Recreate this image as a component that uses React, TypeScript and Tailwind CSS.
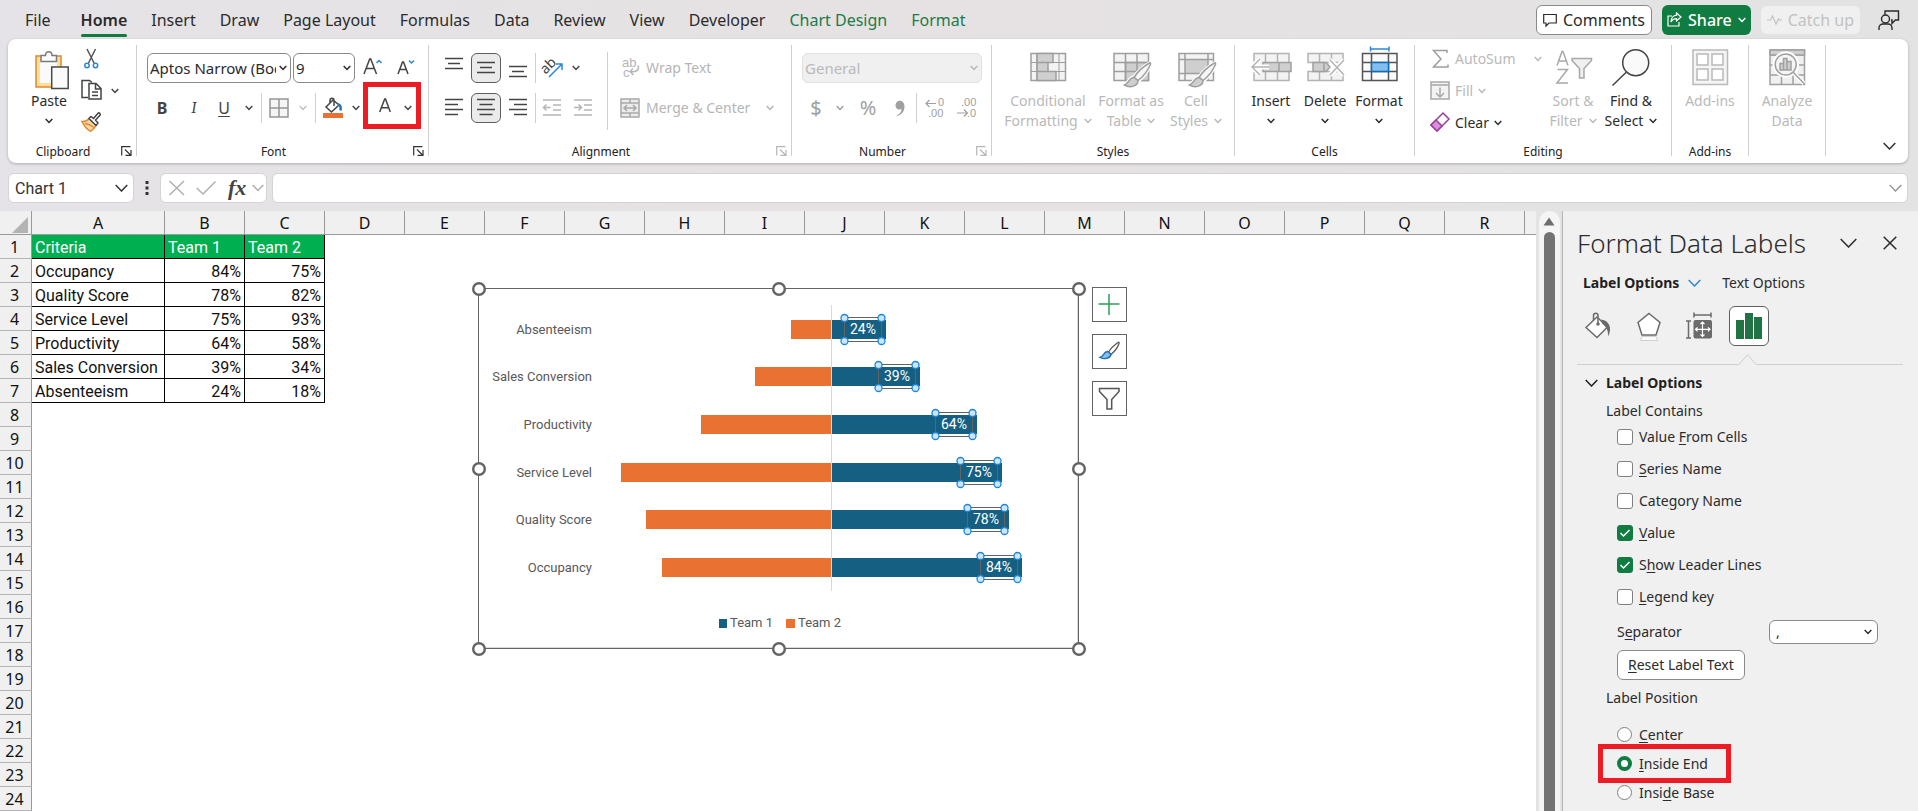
import { ReactNode } from "react";

const criteria = [
  { name: "Occupancy", team1: 84, team2: 75 },
  { name: "Quality Score", team1: 78, team2: 82 },
  { name: "Service Level", team1: 75, team2: 93 },
  { name: "Productivity", team1: 64, team2: 58 },
  { name: "Sales Conversion", team1: 39, team2: 34 },
  { name: "Absenteeism", team1: 24, team2: 18 },
];

const columns = "ABCDEFGHIJKLMNOPQR".split("");
const rows = Array.from({ length: 24 }, (_, i) => i + 1);

const Chevron = ({ size = 8, className = "", stroke = 1.5 }: any) => (
  <svg
    width={size}
    height={size / 2 + 2}
    viewBox={`0 0 ${size} ${size / 2 + 2}`}
    fill="none"
    stroke="currentColor"
    strokeWidth={stroke}
    className={`shrink-0 ${className}`}
  >
    <path d={`M0.7 1 L${size / 2} ${size / 2 + 0.5} L${size - 0.7} 1`} />
  </svg>
);

const Icon = ({ w = 20, h = 20, children, className = "" }: any) => (
  <svg
    width={w}
    height={h}
    viewBox={`0 0 ${w} ${h}`}
    fill="none"
    stroke="currentColor"
    strokeWidth={1.5}
    className={`shrink-0 overflow-visible ${className}`}
  >
    {children}
  </svg>
);

/* ---------- tabs ---------- */

const tabs = [
  "Insert",
  "Draw",
  "Page Layout",
  "Formulas",
  "Data",
  "Review",
  "View",
  "Developer",
];

const TabBar = () => (
  <header className="flex h-[39px] items-center justify-between pl-[25px] pr-[18px] text-base leading-5 text-[#2b2b2b]">
    <nav className="flex h-full items-center gap-6 whitespace-nowrap">
      <button className="mr-1.5">File</button>
      <button className="relative font-semibold">
        Home
        <span className="absolute inset-x-0 -bottom-[7px] h-[3px] rounded-full bg-[#107c41]" />
      </button>
      {tabs.map((tab) => (
        <button key={tab}>{tab}</button>
      ))}
      <button className="text-[#1b7c48]">Chart Design</button>
      <button className="text-[#1b7c48]">Format</button>
    </nav>
    <div className="flex items-center whitespace-nowrap">
      <button className="flex h-[30px] items-center gap-1.5 rounded-md border border-[#8a8a8a] bg-white px-1.5">
        <Icon w={14} h={14}>
          <path d="M0.7 1.5h12.6v8.5H6L3 13v-3H0.7z" strokeWidth={1.2} />
        </Icon>
        Comments
      </button>
      <button className="ml-2.5 flex h-[30px] items-center gap-1.5 rounded-md bg-[#107c41] px-[5px] font-medium text-white">
        <Icon w={15} h={15}>
          <path
            d="M5 4H1v10h11v-4M9.5 1l4.500 4-4.500 4V6.700C6.500 6.700 5 8 4 10c0-3.500 2-6.500 5.500-6.800z"
            strokeWidth={1.2}
          />
        </Icon>
        Share
        <Chevron />
      </button>
      <button className="ml-2.5 flex h-7 items-center gap-1.5 rounded-md bg-[#f0f0f0] px-1.5 text-[#c2c2c2]">
        <Icon w={15} h={14}>
          <path d="M0 7h3.5l2-4 3.5 8 2.5-5 1 1H15" strokeWidth={1.2} />
        </Icon>
        Catch up
      </button>
      <button className="ml-[18px]" aria-label="Account">
        <Icon w={22} h={22}>
          <path d="M7 6V2h13.5v9h-3.2L14 14.5V11h-1" strokeWidth={1.4} />
          <circle cx="7.5" cy="10" r="4" strokeWidth={1.4} />
          <path d="M1 21v-2c0-2.500 2-4 4-4h5c2 0 4 1.500 4 4v2" strokeWidth={1.4} />
        </Icon>
      </button>
    </div>
  </header>
);

/* ---------- ribbon ---------- */

const Launcher = ({ muted }: any) => (
  <button
    className={`absolute bottom-0 right-1 ${muted ? "text-[#b5b5b5]" : "text-[#333]"}`}
    aria-label="More settings"
  >
    <Icon w={11} h={10}>
      <path d="M9.5 0.700H0.700V9.500M4 3.500l5.500 5.500M10 4v5.400H4.500" strokeWidth={1.2} />
    </Icon>
  </button>
);

const Group = ({ label, className, children, launcher, muted }: any) => (
  <section
    className={`relative flex shrink-0 flex-col border-r border-[#d0d0d0] ${className}`}
  >
    <div className="flex h-[99px]">{children}</div>
    <h2
      className={`h-3 text-center text-xs leading-4 text-[#222] ${launcher ? "pr-[18px]" : ""}`}
    >
      {label}
    </h2>
    {launcher && <Launcher muted={muted} />}
  </section>
);

const BigButton = ({ icon, lines, chevron, muted, className = "" }: any) => (
  <button
    className={`flex flex-col items-center pt-[5px] text-sm leading-5 whitespace-nowrap ${
      muted ? "text-[#b9b9b9]" : "text-[#2b2b2b]"
    } ${className}`}
  >
    {icon}
    <span className="mt-px">{lines[0]}</span>
    <span className="flex h-5 items-center gap-1.5">
      {lines[1]}
      {chevron && <Chevron />}
    </span>
  </button>
);

const Divider = () => <span className="h-[30px] w-px bg-[#d0d0d0]" />;

const IconButton = ({ label, active, className = "w-[30px]", children }: any) => (
  <button
    aria-label={label}
    className={`flex h-[30px] shrink-0 items-center justify-center ${
      active ? "rounded-md border border-[#5f5f5f] bg-[#ebebeb]" : ""
    } ${className}`}
  >
    {children}
  </button>
);

const Lines = ({ widths, align = "center", y = 0, gap = 5 }: any) => (
  <Icon w={18} h={18}>
    {widths.map((w: number, i: number) => {
      const x = align === "left" ? 0 : align === "right" ? 18 - w : (18 - w) / 2;
      return <path key={i} d={`M${x} ${y + 0.5 + i * gap}h${w}`} />;
    })}
  </Icon>
);

const PasteIcon = () => (
  <Icon w={40} h={40}>
    <rect x="7" y="6" width="25" height="31" fill="#fbdf9b" stroke="#e2892a" />
    <rect x="11" y="10" width="17" height="23" fill="#fafafa" stroke="none" />
    <path d="M12 11.5V5.500h4.500c0-5 6.500-5 6.500 0h4.500v6z" fill="#fafafa" stroke="#7b7b7b" />
    <rect x="22.7" y="17" width="16.5" height="21.5" fill="#fafafa" stroke="#4a4a4a" />
  </Icon>
);

const BigBrush = () => (
  <g>
    <path
      d="M38.5 13.500c-7 4-12 9-15.500 14-5 0-5 6-9 7.500 6 3.500 13 1 13-4C32 27 37 20 39.500 14.500c.4-1-.2-1.400-1-1z"
      fill="#fff"
      stroke="#fff"
      strokeWidth={4}
    />
    <path d="M38.5 13c-7 4-12.500 9.500-15.500 14.500l4 3C32 27 37 20 39.500 14.500c.4-1-.2-2-1-1.500z" fill="#f5f5f5" />
    <path d="M23 27.500c-5 0-5 6-9.500 7.500 6 3.500 13.500 1 13.500-4.500z" fill="#cfcfcf" />
  </g>
);

const Clipboard = () => (
  <Group label="Clipboard" className="w-[129px]" launcher>
    <BigButton className="ml-[21px] w-10" icon={<PasteIcon />} lines={["Paste"]} chevron />
    <div className="ml-3 flex flex-col gap-3 pt-1 text-[#444]">
      <button aria-label="Cut" className="h-5">
        <Icon>
          <path d="M6 0l7 14M14.5 0L7.500 14" stroke="#555" />
          <circle cx="6" cy="16.5" r="2.2" stroke="#2b88c9" />
          <circle cx="14.5" cy="16.5" r="2.2" stroke="#2b88c9" />
        </Icon>
      </button>
      <button aria-label="Copy" className="flex h-5 items-center gap-2.5">
        <Icon>
          <path d="M7 16.500H1V-0.500h7.500l2.500 2" />
          <path d="M8 2.500h7l5 5V18H8zM14.5 2.500V8H20M11 11h6M11 14.500h6" />
        </Icon>
        <Chevron />
      </button>
      <button aria-label="Format painter" className="h-5">
        <Icon>
          <path d="M1 8.500c3 .5 5-.5 7-3l7 7c-1 2-3 4.500-5.500 5.800C6 16.500 3 13 1 8.500z" fill="#f8d7a8" stroke="#e08a2d" />
          <path d="M4 10.500c4 .5 7 2.500 9 4" stroke="#e08a2d" />
          <path d="M8 5.500l2-2 2.500 2L17 .2c1-1 3 .7 2 2L14.500 7l2.500 3-2 2.500z" fill="#fff" />
        </Icon>
      </button>
    </div>
  </Group>
);

const FontGroup = () => (
  <Group label="Font" className="w-[292px]" launcher>
    <div className="flex flex-col gap-2.5 pt-2 pl-2.5 text-[#444]">
      <div className="flex h-[30px] items-center">
        <label className="relative flex items-center text-[#2b2b2b]">
          <select
            aria-label="Font name"
            className="h-[30px] w-36 appearance-none rounded-md border border-[#8a8a8a] bg-white pl-0.5 pr-3.5 text-[15px]"
          >
            <option>Aptos Narrow (Body)</option>
          </select>
          <Chevron className="pointer-events-none absolute right-1" />
        </label>
        <label className="relative ml-0.5 flex items-center text-[#2b2b2b]">
          <select
            aria-label="Font size"
            className="h-[30px] w-[62px] appearance-none rounded-md border border-[#8a8a8a] bg-white pl-0.5 text-[15px]"
          >
            <option>9</option>
          </select>
          <Chevron className="pointer-events-none absolute right-1" />
        </label>
        <IconButton label="Increase font size" className="ml-2 w-5">
          <Icon w={20} h={20}>
            <path d="M1 16L6.700 1h1L13.500 16M3 10.500h8.500" />
            <path d="M13.5 5l2.500-2.500 2.500 2.500" stroke="#2b88c9" />
          </Icon>
        </IconButton>
        <IconButton label="Decrease font size" className="ml-3.5 w-5">
          <Icon w={20} h={20}>
            <path d="M1 16L5.500 4h1L11 16M2.700 11.500h6.800" />
            <path d="M12 2.500l2.500 2.500L17 2.500" stroke="#2b88c9" />
          </Icon>
        </IconButton>
      </div>
      <div className="flex h-[30px] items-center text-base">
        <IconButton label="Bold">
          <b>B</b>
        </IconButton>
        <IconButton label="Italic" className="ml-0.5 w-[30px]">
          <i className="font-serif">I</i>
        </IconButton>
        <IconButton label="Underline" className="w-[30px]">
          <span className="underline underline-offset-2">U</span>
        </IconButton>
        <Chevron className="ml-1.5 mr-2" />
        <Divider />
        <IconButton label="Borders" className="ml-[7px] w-5">
          <Icon>
            <path d="M1 1h18v18H1zM10 1v18M1 10h18" fill="#f5f5f5" stroke="#959595" />
          </Icon>
        </IconButton>
        <Chevron className="ml-2.5 mr-2 text-[#c0c0c0]" />
        <Divider />
        <IconButton label="Fill color" className="ml-[7px] w-5">
          <Icon>
            <path d="M3 9l7-7 6 5-7.500 7zM7 5V2.500c0-3 4-3 4 0V8" />
            <path d="M15 6.500c2.500 0 3 3 2.500 6" stroke="#2372b8" strokeWidth={2.5} />
            <rect x="0" y="15" width="20" height="5" fill="#e97132" stroke="none" />
          </Icon>
        </IconButton>
        <Chevron className="ml-[9px] mr-[3px]" />
        <div className="relative flex h-[30px] w-[58px] items-center justify-end gap-[13px] pr-[9px]">
          <button aria-label="Font color">
            <Icon w={12} h={20}>
              <path d="M0.7 14L5.700 1h.8L11.300 14M2.500 9.700h7" />
            </Icon>
          </button>
          <Chevron />
          <span className="pointer-events-none absolute inset-x-0 -bottom-1.5 -top-[11px] border-[5px] border-[#ed1c24]" />
        </div>
      </div>
    </div>
  </Group>
);

const AlignmentGroup = () => (
  <Group label="Alignment" className="w-[363px]" launcher muted>
    <div className="flex flex-col gap-2.5 pt-2 pl-2.5 text-[#444]">
      <div className="flex gap-0.5">
        <IconButton label="Top align">
          <Lines widths={[18, 12, 18]} y={-1} />
        </IconButton>
        <IconButton label="Middle align" active>
          <Lines widths={[18, 12, 18]} y={3} />
        </IconButton>
        <IconButton label="Bottom align">
          <Lines widths={[18, 12, 18]} y={7} />
        </IconButton>
        <Divider />
        <button aria-label="Orientation" className="ml-1 flex items-center gap-2">
          <Icon w={22} h={20}>
            <text x="-1" y="12" fontSize="14" fill="#444" stroke="none" transform="rotate(-45 7 9)">
              ab
            </text>
            <path d="M7 19L19.500 6.500M14 6h6v6" stroke="#2b88d8" />
          </Icon>
          <Chevron />
        </button>
      </div>
      <div className="flex gap-0.5">
        <IconButton label="Align left">
          <Lines widths={[18, 13, 18, 13]} align="left" />
        </IconButton>
        <IconButton label="Center" active>
          <Lines widths={[18, 13, 18, 13]} />
        </IconButton>
        <IconButton label="Align right">
          <Lines widths={[18, 13, 18, 13]} align="right" />
        </IconButton>
        <Divider />
        <span className="flex gap-0.5 text-[#b5b5b5]">
          <IconButton label="Decrease indent" className="w-7">
            <Icon w={18} h={18}>
              <path d="M0 1h18M10 6h8M10 11h8M0 16h18M7.5 8.500H1M3.500 5.500l-3 3 3 3" />
            </Icon>
          </IconButton>
          <IconButton label="Increase indent">
            <Icon w={18} h={18}>
              <path d="M0 1h18M10 6h8M10 11h8M0 16h18M0 8.500h7M4.500 5.500l3 3-3 3" />
            </Icon>
          </IconButton>
        </span>
      </div>
    </div>
    <div className="ml-[9px] mt-[7px] h-[78px] border-l border-[#d0d0d0] pl-3 pt-px text-sm leading-5 text-[#b5b5b5]">
      <button className="flex h-[30px] items-center gap-1.5">
        <Icon>
          <g fontSize="13" fontFamily="Liberation Sans, sans-serif" fill="currentColor" stroke="none">
            <text x="2" y="9">ab</text>
            <text x="3" y="19">c</text>
          </g>
          <path d="M18 7.500c2 5-3 7-8 6M13 10.500l-3 3 3.500 3.500" />
        </Icon>
        Wrap Text
      </button>
      <button className="mt-2.5 flex h-[30px] items-center gap-1.5">
        <Icon>
          <path d="M1 1h18v18H1zM1 5h18M1 15h18M10 1v4M10 15v4" fill="#ececec" stroke="#a8a8a8" />
          <path d="M4 10h12M7 7l-3 3 3 3M13 7l3 3-3 3" stroke="#a8a8a8" />
        </Icon>
        <span>Merge &amp; Center</span>
        <Chevron className="ml-2.5" />
      </button>
    </div>
  </Group>
);

const NumberGroup = () => (
  <Group label="Number" className="w-[200px]" launcher muted>
    <div className="flex flex-col gap-2.5 pt-2 pl-2.5 text-[#a0a0a0]">
      <label className="relative flex items-center text-[#b9b9b9]">
        <select
          aria-label="Number format"
          disabled
          className="h-[30px] w-[180px] appearance-none rounded-md border border-[#e0e0e0] bg-[#f0f0f0] pl-0.5 text-[15px]"
        >
          <option>General</option>
        </select>
        <Chevron className="pointer-events-none absolute right-1" />
      </label>
      <div className="flex items-center">
        <IconButton label="Currency" className="w-7 text-xl">
          $
        </IconButton>
        <Chevron className="ml-1.5" />
        <IconButton label="Percent" className="ml-1 w-10 text-xl">
          %
        </IconButton>
        <IconButton label="Comma" className="w-6">
          <Icon w={10} h={18}>
            <path d="M1.5 16.500c3.500-1.500 5-3.500 5-6.500C3 11.500.5 9.500.5 6.500c0-6.500 9-6.500 9 1 0 5-3 8.500-7.500 9.500z" fill="#a0a0a0" stroke="none" />
          </Icon>
        </IconButton>
        <span className="ml-1 flex gap-1.5">
          <Divider />
          <IconButton label="Increase decimal" className="ml-0.5 w-5">
            <Icon>
              <g fontSize="11" fontFamily="Liberation Sans, sans-serif" fill="currentColor" stroke="none">
                <text x="13" y="8">0</text>
                <text x="3" y="19">.00</text>
              </g>
              <path d="M11 5.500H1M4.500 2L1 5.500 4.500 9" strokeWidth={1.2} />
            </Icon>
          </IconButton>
          <IconButton label="Decrease decimal" className="ml-1.5 w-5">
            <Icon>
              <g fontSize="11" fontFamily="Liberation Sans, sans-serif" fill="currentColor" stroke="none">
                <text x="4" y="8">.00</text>
                <text x="10" y="19">.0</text>
              </g>
              <path d="M0 15h10M7 11.500l3.500 3.500L7 18.500" strokeWidth={1.2} />
            </Icon>
          </IconButton>
        </span>
      </div>
    </div>
  </Group>
);

const StylesGroup = () => (
  <Group label="Styles" className="w-[243px]">
    <BigButton
      className="ml-[13px] w-[86px]"
      muted
      chevron
      lines={["Conditional", "Formatting"]}
      icon={
        <Icon w={40} h={40} className="text-[#9e9e9e]">
          <rect x="3" y="3.5" width="34.5" height="27" fill="#f3f3f3" />
          <path d="M9 3.500h16v9H9zM9 12.500h11v9H9zM9 21.500h19v9H9z" fill="#cfcfcf" />
          <path d="M3 12.500h34.500M3 21.500h34.500M9 3.500v27M31 3.500v27" strokeWidth={1} />
        </Icon>
      }
    />
    <BigButton
      className="ml-[7px] w-[66px]"
      muted
      chevron
      lines={["Format as", "Table"]}
      icon={
        <Icon w={40} h={40} className="text-[#9e9e9e]">
          <rect x="3" y="3.5" width="34.5" height="27" fill="#f3f3f3" />
          <path d="M14.5 12.500H37.500v18h-23z" fill="#cfcfcf" />
          <path d="M3 12.500h34.500M3 21.500h34.500M14.500 3.500v27M26 3.500v27" />
          <BigBrush />
        </Icon>
      }
    />
    <BigButton
      className="ml-1.5 w-[52px]"
      muted
      chevron
      lines={["Cell", "Styles"]}
      icon={
        <Icon w={40} h={40} className="text-[#9e9e9e]">
          <rect x="3" y="3.5" width="34.5" height="27" fill="#f3f3f3" />
          <path d="M9 9.500h23v14H9z" fill="#cfcfcf" stroke="none" />
          <path d="M3 9.500h34.500M3 23.500h34.500M9 3.500v27M32 3.500v27" />
          <BigBrush />
        </Icon>
      }
    />
  </Group>
);

const CellsGroup = () => (
  <Group label="Cells" className="w-[180px]">
    <BigButton
      className="ml-[9px] w-[54px]"
      chevron
      lines={["Insert"]}
      icon={
        <Icon w={40} h={40} className="text-[#b3b3b3]">
          <path d="M3 3.500h35v27H3zM14.500 3.500v27M26.500 3.500v27" fill="#f3f3f3" />
          <path d="M12 12.500h28v9H12zM28 12.500v9" fill="#cfcfcf" stroke="#a0a0a0" />
          <path d="M18 17H1M9 9l-8 8 8 8" stroke="#fff" strokeWidth={5} />
          <path d="M18 17H1M9 9l-8 8 8 8" />
        </Icon>
      }
    />
    <BigButton
      className="w-[54px]"
      chevron
      lines={["Delete"]}
      icon={
        <Icon w={40} h={40} className="text-[#b3b3b3]">
          <path d="M3 3.500h35v9H3zM3 21.500h35v9H3zM14.500 3.500v9M26.500 3.500v9M14.500 21.500v9M26.500 21.500v9" fill="#f3f3f3" />
          <path d="M8 12.500h13l4 4.500-4 4.500H8zM19 12.500v9" fill="#cfcfcf" stroke="#a0a0a0" />
          <path d="M25 10l14 15M39 10L25 25" stroke="#fff" strokeWidth={5} />
          <path d="M25 10l14 15M39 10L25 25" />
        </Icon>
      }
    />
    <BigButton
      className="w-[54px]"
      chevron
      lines={["Format"]}
      icon={
        <Icon w={40} h={40} className="text-[#555]">
          <path d="M3.5 3.500h34.500v27H3.500zM3.500 12.500H38M3.500 21.500H38M12.500 3.500v27M29.500 3.500v27" fill="#fafafa" />
          <rect x="12.5" y="12.5" width="17" height="9" fill="#83beec" stroke="#0f6cbd" />
          <path d="M11.5-1h18.500M11.500-3.500v5M30-3.500v5" stroke="#2b88d8" />
        </Icon>
      }
    />
  </Group>
);

const EditingGroup = () => (
  <Group label="Editing" className="w-[257px]">
    <div className="ml-[15px] flex w-[118px] flex-col gap-3 pt-1 text-sm leading-5 text-[#b9b9b9]">
      <button className="flex items-center gap-[5px]">
        <Icon className="text-[#9e9e9e]">
          <path d="M17 4V1.500H3.500L11 10l-7.500 8H18v-2.500" />
        </Icon>
        AutoSum
        <Chevron className="ml-auto mr-1.5" />
      </button>
      <button className="flex items-center gap-[5px]">
        <Icon className="text-[#a8a8a8]">
          <path d="M1 1h18v17H1zM1 4h18M10 6.500v9M6 12l4 4 4-4" fill="#f3f3f3" />
        </Icon>
        Fill
        <Chevron />
      </button>
      <button className="flex items-center gap-[5px] text-[#2b2b2b]">
        <Icon className="text-[#9a3fa0]">
          <path d="M13 0l6 6L7 18l-6-6z" fill="#fff" />
          <path d="M6 7l6 6-5 5-6-6z" fill="#d98fdc" />
        </Icon>
        Clear
        <Chevron />
      </button>
    </div>
    <BigButton
      className="w-[50px]"
      muted
      chevron
      lines={["Sort &", "Filter"]}
      icon={
        <Icon w={40} h={40} className="text-[#a8a8a8]">
          <path d="M4 15.500L9 1.500h1l5 14M6 11h7.500M4.500 19.500h10l-10.500 13.500h11" />
          <path d="M19 8.500h19.500v2l-7.500 8V28h-4.500v-9.500l-7.500-8z" fill="#f0f0f0" />
        </Icon>
      }
    />
    <BigButton
      className="ml-1 w-[58px]"
      chevron
      lines={["Find &", "Select"]}
      icon={
        <Icon w={40} h={40} className="text-[#444]">
          <circle cx="24.7" cy="12.7" r="13" fill="#fafafa" />
          <path d="M15.5 22L1.500 35.500" />
        </Icon>
      }
    />
  </Group>
);

const AddinsGroups = () => (
  <>
    <Group label="Add-ins" className="w-[77px]">
      <BigButton
        className="w-full"
        muted
        lines={["Add-ins"]}
        icon={
          <Icon w={40} h={40}>
            <rect x="3" y="0" width="34.5" height="34.5" fill="#f5f5f5" />
            <path d="M7 4h11v11H7zM22 4h11v11H22zM7 19h11v11H7zM22 19h11v11H22z" fill="#fff" />
          </Icon>
        }
      />
    </Group>
    <Group label="" className="w-[77px]">
      <BigButton
        className="w-full"
        muted
        lines={["Analyze", "Data"]}
        icon={
          <Icon w={40} h={40} className="text-[#a0a0a0]">
            <path d="M3 0h34.500v34.500H3zM3 5h34.500M3 15h34.500M3 25h34.500M14.500 25v9.500M26 25v9.500" fill="#f0f0f0" />
            <path d="M3 0h34.500v5H3z" fill="#cfcfcf" />
            <path d="M26 22l11 11.500" stroke="#fff" strokeWidth={4} />
            <circle cx="18.7" cy="14.5" r="12.5" fill="#fff" stroke="#fff" />
            <circle cx="18.7" cy="14.5" r="10.5" fill="#f5f5f5" />
            <path d="M26 22l11 11.500" />
            <path d="M13 13.500h3.500V20H13zM16.500 8.500H20V20h-3.500zM20 11.500h4V20h-4z" fill="#cfcfcf" />
          </Icon>
        }
      />
    </Group>
  </>
);

const Ribbon = () => (
  <div className="mx-2 mr-2.5 flex rounded-lg bg-white pb-[7px] pt-1.5 shadow-[0_1px_3px_rgba(0,0,0,0.25)]">
    <Clipboard />
    <FontGroup />
    <AlignmentGroup />
    <NumberGroup />
    <StylesGroup />
    <CellsGroup />
    <EditingGroup />
    <AddinsGroups />
    <button
      aria-label="Collapse ribbon"
      className="ml-auto mr-3 flex items-end pb-1.5 text-[#333]"
    >
      <Chevron size={13} />
    </button>
  </div>
);

/* ---------- formula bar ---------- */

const FormulaBar = () => (
  <div className="mb-2 ml-2 mr-2.5 mt-2.5 flex h-[30px] text-[#333]">
    <label className="relative flex w-[126px] items-center">
      <input
        aria-label="Name box"
        defaultValue="Chart 1"
        className="h-full w-full rounded-md border border-[#d4d4d4] bg-white pl-1.5 font-[Roboto,sans-serif] text-base"
      />
      <Chevron size={13} className="absolute right-1.5" />
    </label>
    <span className="flex w-[26px] items-center justify-center">
      <Icon w={4} h={14}>
        <path d="M2 0v3M2 5.500v3M2 11v3" strokeWidth={3} />
      </Icon>
    </span>
    <div className="flex w-[107px] items-center rounded-md border border-[#d4d4d4] bg-white px-[7px] text-[#b0b0b0]">
      <button aria-label="Cancel">
        <Icon w={18} h={16}>
          <path d="M1.5 1l14.500 14M16 1L1.500 15" />
        </Icon>
      </button>
      <button aria-label="Enter" className="ml-2.5">
        <Icon w={20} h={16}>
          <path d="M0.7 8l6.300 6L19.500 1.500" />
        </Icon>
      </button>
      <button
        aria-label="Insert function"
        className="ml-3 font-['Liberation_Serif',serif] text-[22px] leading-6 font-bold italic text-[#444]"
      >
        fx
      </button>
      <Chevron size={12} className="ml-1.5" />
    </div>
    <label className="relative ml-[5px] flex flex-1 items-center">
      <input
        aria-label="Formula"
        className="h-full w-full rounded-md border border-[#d4d4d4] bg-white px-2"
      />
      <Chevron size={13} className="absolute right-1.5 text-[#999]" />
    </label>
  </div>
);

/* ---------- sheet ---------- */

const Sheet = () => (
  <table className="w-full table-fixed border-separate border-spacing-0 bg-white font-[Roboto,sans-serif] text-base leading-[21px] text-[#111]">
    <colgroup>
      <col className="w-8" />
      <col className="w-[133px]" />
      {columns.slice(1).map((c) => (
        <col key={c} className="w-20" />
      ))}
      <col />
    </colgroup>
    <thead>
      <tr className="h-6 bg-[#f0f0f0] font-['Noto_Sans',sans-serif]">
        <th className="border-b border-r border-[#999] p-0">
          <svg width="16" height="16" className="ml-3 mt-1">
            <path d="M16 0v16H0z" fill="#b3b3b3" />
          </svg>
        </th>
        {columns.map((c) => (
          <th key={c} className="border-b border-r border-[#999] p-0 pt-0.5 font-normal">
            {c}
          </th>
        ))}
        <th className="border-b border-[#999] p-0" />
      </tr>
    </thead>
    <tbody>
      {rows.map((row) => {
        const item = criteria[row - 2];
        return (
          <tr key={row} className="h-6">
            <th className="border-b border-r border-[#b5b5b5] border-r-[#999] bg-[#f0f0f0] p-0 pr-0.5 pt-0.5 font-['Noto_Sans',sans-serif] font-normal">
              {row}
            </th>
            {row === 1 &&
              ["Criteria", "Team 1", "Team 2"].map((h) => (
                <td key={h} className="border-b border-r border-black bg-[#00b050] p-0 pl-[3px] pt-0.5 text-white">
                  {h}
                </td>
              ))}
            {item && (
              <>
                <td className="border-b border-r border-black p-0 pl-[3px] pt-0.5 whitespace-nowrap">
                  {item.name}
                </td>
                <td className="border-b border-r border-black p-0 pr-[3px] pt-0.5 text-right">
                  {item.team1}%
                </td>
                <td className="border-b border-r border-black p-0 pr-[3px] pt-0.5 text-right">
                  {item.team2}%
                </td>
              </>
            )}
          </tr>
        );
      })}
    </tbody>
  </table>
);

const AXIS = 362;
const SCALE = 2.267;

const Chart = () => (
  <svg width="618" height="378" className="block font-[Roboto,sans-serif] text-[13px]">
    <rect x="8.5" y="8.5" width="600" height="360" fill="#fff" stroke="#636363" />
    <path d="M10 367.500H607M607.500 10V367" stroke="#d9d9d9" />
    {[...criteria].reverse().map((c, i) => {
      const y = Math.round(39.8 + i * 47.6);
      const end = AXIS + Math.round(c.team1 * SCALE);
      const left = Math.round(AXIS - c.team2 * SCALE);
      return (
        <g key={c.name}>
          <text x="122" y={y + 14} textAnchor="end" fill="#595959">
            {c.name}
          </text>
          <rect x={left} y={y} width={AXIS - 1 - left} height="19" fill="#e97132" />
          <rect x={AXIS} y={y} width={end - AXIS} height="19" fill="#156082" />
          <rect x={end - 41.5} y={y - 2.5} width="37" height="24" fill="none" stroke="#636363" />
          <text x={end - 23} y={y + 14} textAnchor="middle" fill="#fff" fontSize="14">
            {c.team1}%
          </text>
          {[end - 41.5, end - 4.5].map((cx) =>
            [y - 2, y + 21].map((cy) => (
              <circle key={`${cx}-${cy}`} cx={cx} cy={cy} r="3.5" fill="#cde6f7" stroke="#1a86d9" strokeWidth="1.3" />
            ))
          )}
        </g>
      );
    })}
    <path d="M361.5 25V311" stroke="#d9d9d9" />
    <rect x="249" y="339" width="8" height="9" fill="#156082" />
    <text x="260" y="347" fill="#595959">Team 1</text>
    <rect x="316" y="339" width="9" height="9" fill="#e97132" />
    <text x="328" y="347" fill="#595959">Team 2</text>
    {[
      [9, 9],
      [309, 9],
      [609, 9],
      [9, 189],
      [609, 189],
      [9, 369],
      [309, 369],
      [609, 369],
    ].map(([cx, cy]) => (
      <circle key={`${cx}-${cy}`} cx={cx} cy={cy} r="5.8" fill="#fff" stroke="#636363" strokeWidth="2.4" />
    ))}
  </svg>
);

const ChartButton = ({ label, children }: any) => (
  <button
    aria-label={label}
    className="flex size-[35px] items-center justify-center border border-[#636363] bg-white text-[#555]"
  >
    {children}
  </button>
);

const ChartArea = () => (
  <div className="absolute left-[470px] top-[69px] flex gap-1">
    <Chart />
    <div className="flex flex-col gap-3 pt-[7px]">
      <ChartButton label="Chart elements">
        <Icon w={21} h={21}>
          <path d="M10 0v21M-0.500 10h21" stroke="#2ca05a" />
        </Icon>
      </ChartButton>
      <ChartButton label="Chart styles">
        <Icon w={21} h={21}>
          <path d="M20 2.500c.5-1-.2-1.700-1.200-1C14 5 11 8.500 9.500 11l2.500 2.500C15 11 18.500 7 20 2.500z" fill="#fff" strokeWidth={1.3} />
          <path d="M9 10.500c-4.500-.5-4 5-8 6 4 2 10 1.500 11-3z" fill="#83beec" stroke="#1f6fb5" strokeWidth={1.3} />
        </Icon>
      </ChartButton>
      <ChartButton label="Chart filters">
        <Icon w={21} h={23}>
          <path d="M0.5 1.500H20v3l-7.300 8V22H8v-9.500l-7.500-8z" fill="#fafafa" />
        </Icon>
      </ChartButton>
    </div>
  </div>
);

const ScrollBar = () => (
  <div className="flex w-[26px] shrink-0 justify-center">
    <div className="flex w-[21px] flex-col items-center rounded-t-full bg-[#f5f5f5] pt-1.5">
      <svg width="12" height="9">
        <path d="M6 0.500L11.500 8.500H0.500z" fill="#6e6e6e" />
      </svg>
      <div className="mt-1.5 w-[11px] flex-1 rounded-t-full bg-[#737373]" />
    </div>
  </div>
);

/* ---------- format pane ---------- */

const Accel = ({ text, at = 0 }: { text: string; at?: number }) => (
  <span>
    {text.slice(0, at)}
    <span className="underline underline-offset-2">{text[at]}</span>
    {text.slice(at + 1)}
  </span>
);

const CheckRow = ({ text, at, checked }: any) => (
  <label className="flex h-8 items-center gap-1.5">
    <span className="relative flex size-4">
      <input
        type="checkbox"
        defaultChecked={checked}
        className="peer size-4 appearance-none rounded-[3px] border border-[#808080] bg-white checked:border-[#107c41] checked:bg-[#107c41]"
      />
      <svg
        viewBox="0 0 16 16"
        fill="none"
        stroke="#fff"
        strokeWidth="1.5"
        className="pointer-events-none absolute inset-0 hidden peer-checked:block"
      >
        <path d="M3.5 8l3 3 6-6" />
      </svg>
    </span>
    <Accel text={text} at={at} />
  </label>
);

const RadioRow = ({ text, at, checked, marked }: any) => (
  <label className="relative flex h-[29px] w-[110px] items-center gap-[7px]">
    <input
      type="radio"
      name="position"
      defaultChecked={checked}
      className="size-[15px] appearance-none rounded-full border border-[#808080] bg-white checked:border-4 checked:border-[#107c41]"
    />
    <Accel text={text} at={at} />
    {marked && (
      <span className="pointer-events-none absolute -inset-y-[5px] -left-[19px] w-[133px] border-[5px] border-[#ed1c24]" />
    )}
  </label>
);

const PaneTab = ({ label, children, className = "" }: any): ReactNode => (
  <button aria-label={label} className={`flex size-10 items-center justify-center ${className}`}>
    {children}
  </button>
);

const FormatPane = () => (
  <aside className="w-[356px] shrink-0 overflow-hidden border-l border-[#b5b5b5] bg-[#f0f0f0] pl-3.5 pr-[15px] text-sm leading-5 text-[#2b2b2b]">
    <div className="flex h-16 items-center">
      <h2 className="flex-1 text-[26px] leading-8 font-light">Format Data Labels</h2>
      <button aria-label="Pane options" className="mr-[26px]">
        <Chevron size={17} />
      </button>
      <button aria-label="Close" className="mr-1.5">
        <Icon w={14} h={14}>
          <path d="M0.7 0.700l12.600 12.600M13.300 0.700L0.700 13.300" />
        </Icon>
      </button>
    </div>
    <div className="flex h-4 items-center pl-1.5">
      <button className="flex items-center gap-[9px] font-bold text-[#1f1f1f]">
        Label Options
        <Chevron size={13} className="text-[#2b88d8]" />
      </button>
      <button className="ml-[21px]">Text Options</button>
    </div>
    <div className="mt-[15px] flex items-center gap-2.5 pl-0.5">
      <PaneTab label="Fill & line">
        <Icon w={28} h={28} className="text-[#6b6b6b]">
          <path d="M1 15.500L12 5l10.500 10L12 25.500z" fill="#fff" />
          <path d="M8.5 8V3.500c0-3 4.500-3 4.500 0V11" />
          <circle cx="13" cy="12" r="1" fill="currentColor" />
          <path d="M16.5 7.500c7 1 11.500 8 6.500 17 .5-6-1.500-9.500-6-13z" fill="currentColor" stroke="none" />
        </Icon>
      </PaneTab>
      <PaneTab label="Effects">
        <Icon w={26} h={28} className="text-[#6b6b6b]">
          <path d="M13 1.500l11 9-4 12.500H6L2 10.500z" fill="#fff" />
          <path d="M6 24.500h14l1.500 4h-17z" fill="#fafafa" stroke="#d0d0d0" strokeWidth={1} />
        </Icon>
      </PaneTab>
      <PaneTab label="Size & properties">
        <Icon w={28} h={28} className="text-[#6b6b6b]">
          <path d="M9 3h17M9 0.500v5M26 0.500v5M3.500 9v17M1 9h5M1 26h5" />
          <rect x="8.5" y="8" width="18.5" height="18.5" rx="2" fill="currentColor" stroke="none" />
          <path
            d="M17.5 10v14.500M10.500 17.300h14.500M15.500 12l2-2 2 2M15.500 22.500l2 2 2-2M12.500 15.300l-2 2 2 2M23 15.300l2 2-2 2"
            stroke="#fff"
            strokeWidth={1.2}
          />
        </Icon>
      </PaneTab>
      <PaneTab label="Label options" className="rounded-md border border-[#5f5f5f] bg-white">
        <svg width="26" height="26" fill="#217346">
          <path d="M0 7h8v19H0zM9 0h8v26H9zM18 4h8v22h-8z" />
        </svg>
      </PaneTab>
    </div>
    <div className="mt-2 flex h-[11px] items-end">
      <span className="h-px w-[162px] bg-[#cfcfcf]" />
      <svg width="17" height="11" fill="none" stroke="#cfcfcf">
        <path d="M0 10.500L8.500 0.800L17 10.500" />
      </svg>
      <span className="h-px flex-1 bg-[#cfcfcf]" />
    </div>
    <button className="mt-2 flex items-center gap-2 pl-2 font-bold text-[#1f1f1f]">
      <Chevron size={13} />
      Label Options
    </button>
    <div className="flex flex-col pl-10">
      <h3 className="-ml-[11px] mt-2">Label Contains</h3>
      <CheckRow text="Value From Cells" at={6} />
      <CheckRow text="Series Name" at={0} />
      <CheckRow text="Category Name" at={4} />
      <CheckRow text="Value" at={0} checked />
      <CheckRow text="Show Leader Lines" at={1} checked />
      <CheckRow text="Legend key" at={0} />
      <div className="flex h-[37px] items-center justify-between pr-[25px]">
        <label htmlFor="separator">
          <Accel text="Separator" at={1} />
        </label>
        <span className="relative flex items-center">
          <select
            id="separator"
            className="h-6 w-[109px] appearance-none rounded-md border border-[#8a8a8a] bg-white pl-1.5"
          >
            <option>,</option>
          </select>
          <Chevron className="pointer-events-none absolute right-1.5" />
        </span>
      </div>
      <button className="h-[30px] self-start rounded-md border border-[#8a8a8a] bg-white px-2.5">
        <Accel text="Reset Label Text" at={0} />
      </button>
      <h3 className="-ml-[11px] mb-3 mt-2">Label Position</h3>
      <RadioRow text="Center" at={0} />
      <RadioRow text="Inside End" at={0} checked marked />
      <RadioRow text="Inside Base" at={4} />
    </div>
  </aside>
);

export default function App() {
  return (
    <div className="flex h-screen flex-col overflow-hidden bg-gradient-to-r from-[#e5e3e7] via-[#e6e2e3] to-[#e3e3e3] font-['Noto_Sans',sans-serif]">
      <TabBar />
      <Ribbon />
      <FormulaBar />
      <main className="flex min-h-0 flex-1">
        <div className="relative min-w-0 flex-1 overflow-hidden bg-white">
          <Sheet />
          <ChartArea />
        </div>
        <ScrollBar />
        <FormatPane />
      </main>
    </div>
  );
}
